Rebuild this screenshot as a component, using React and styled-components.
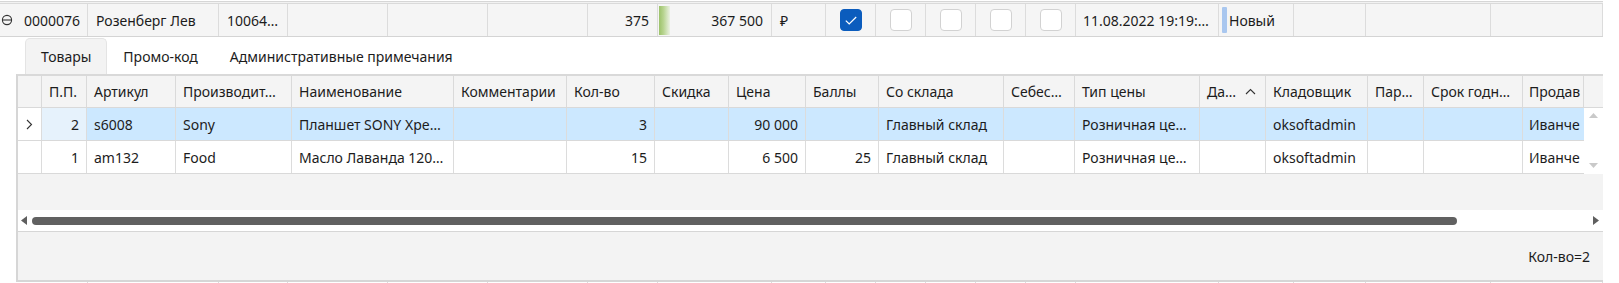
import React from "react";
import styled, { createGlobalStyle } from "styled-components";

const FONT = `"Noto Sans", "Open Sans", "DejaVu Sans", sans-serif`;

const GlobalStyle = createGlobalStyle`
  html, body { margin: 0; padding: 0; background: #ffffff; }
  body { font-family: ${FONT}; font-size: 14px; color: #1c1c1c; overflow: hidden; }
  * { box-sizing: border-box; }
`;

const Page = styled.div`
  width: 1619px;
  height: 283px;
  overflow: hidden;
  padding-top: 1px;
`;

const PrevRowEdge = styled.div`
  width: 1603px;
  height: 2px;
  border-top: 1px solid #d6d6d6;
  background: #f2f2f2;
`;

const masterCols = [88, 131, 69, 100, 100, 100, 70, 114, 54, 50, 50, 50, 50, 50, 143, 75, 72, 125, 112];

const MasterRow = styled.div`
  display: grid;
  grid-template-columns: ${masterCols.map((c) => c + "px").join(" ")};
  width: 1603px;
  height: ${(p) => (p.$stub ? "40px" : "34px")};
  background: ${(p) => (p.$stub ? "#ffffff" : "#f5f5f5")};
  border-top: ${(p) => (p.$stub ? "none" : "1px solid #dadada")};
  border-bottom: 1px solid #d4d4d4;
`;

const MasterCell = styled.div`
  display: flex;
  align-items: center;
  justify-content: ${(p) => (p.$align === "right" ? "flex-end" : p.$align === "center" ? "center" : "flex-start")};
  gap: ${(p) => p.$gap || 0}px;
  padding: 0 ${(p) => (p.$pad ?? 8)}px;
  border-right: 1px solid #dcdcdc;
  white-space: nowrap;
  overflow: hidden;
  min-width: 0;
`;

const Expander = styled.svg`
  flex: none;
  margin-left: -7px;
  margin-right: 11px;
`;

const DataBarCell = styled(MasterCell)`
  justify-content: space-between;
  padding-left: 1px;
`;

const GreenBar = styled.span`
  flex: none;
  width: 11px;
  align-self: stretch;
  margin: 2px 0 1px;
  background: linear-gradient(to right, #9cc26a 0%, #b7d48f 40%, rgba(220, 236, 200, 0.4) 100%);
`;

const StatusBar = styled.span`
  flex: none;
  width: 5px;
  align-self: stretch;
  margin: 3px 0;
  border-radius: 1px;
  background: #a9c7ef;
`;

const Check = styled.span`
  width: 22px;
  height: 22px;
  border-radius: 4px;
  display: flex;
  align-items: center;
  justify-content: center;
  background: ${(p) => (p.$checked ? "#0b5cbd" : "#ffffff")};
  border: 1px solid ${(p) => (p.$checked ? "#0b5cbd" : "#d2d2d2")};
`;

const Detail = styled.div`
  margin-left: 16px;
  width: 1587px;
  background: #ffffff;
`;

const TabStrip = styled.div`
  display: flex;
  align-items: flex-end;
  height: 37px;
  padding-left: 9px;
`;

const Tab = styled.div`
  height: 36px;
  display: flex;
  align-items: center;
  padding: 0 15px;
  border-radius: 5px 5px 0 0;
  border: 1px solid ${(p) => (p.$active ? "#e4e4e4" : "transparent")};
  border-bottom: none;
  background: ${(p) => (p.$active ? "#f3f3f3" : "transparent")};
  color: #1c1c1c;
`;

const Grid = styled.div`
  border-top: 2px solid #d9d9d9;
  border-left: 2px solid #d6d6d6;
  border-bottom: 2px solid #d6d6d6;
  height: 208px;
  display: flex;
  flex-direction: column;
`;

const gridCols = [
  { w: 24, label: "" },
  { w: 45, label: "П.П.", align: "right" },
  { w: 89, label: "Артикул" },
  { w: 116, label: "Производит…" },
  { w: 162, label: "Наименование" },
  { w: 113, label: "Комментарии" },
  { w: 88, label: "Кол-во", align: "right" },
  { w: 74, label: "Скидка", align: "right" },
  { w: 77, label: "Цена", align: "right" },
  { w: 73, label: "Баллы", align: "right" },
  { w: 125, label: "Со склада" },
  { w: 71, label: "Себес…" },
  { w: 125, label: "Тип цены" },
  { w: 66, label: "Да…", sort: true },
  { w: 102, label: "Кладовщик" },
  { w: 56, label: "Пар…" },
  { w: 99, label: "Срок годн…" },
  { w: 61, label: "Продав", clip: true },
];

const colTemplate = gridCols.map((c) => c.w + "px").join(" ");

const HeaderRow = styled.div`
  display: grid;
  grid-template-columns: ${colTemplate} 19px;
  height: 32px;
  background: #f4f4f4;
  border-bottom: 1px solid #d9d9d9;
`;

const HeaderCell = styled.div`
  display: flex;
  align-items: center;
  gap: 9px;
  padding: ${(p) => (p.$clip ? "0 0 0 6px" : "0 7px")};
  border-right: ${(p) => (p.$last ? "none" : "1px solid #dadada")};
  white-space: nowrap;
  overflow: hidden;
  min-width: 0;
`;

const Body = styled.div`
  display: flex;
  height: 66px;
`;

const Rows = styled.div`
  width: 1566px;
  display: flex;
  flex-direction: column;
`;

const DataRow = styled.div`
  display: grid;
  grid-template-columns: ${colTemplate};
  height: 33px;
  border-bottom: 1px solid #d9d9d9;
`;

const DataCell = styled.div`
  display: flex;
  align-items: center;
  justify-content: ${(p) => (p.$align === "right" ? "flex-end" : "flex-start")};
  padding: ${(p) => (p.$clip ? "0 0 0 6px" : "0 7px")};
  border-right: ${(p) => (p.$clip ? "none" : "1px solid #dcdcdc")};
  background: ${(p) => p.$bg};
  white-space: nowrap;
  overflow: hidden;
  min-width: 0;
`;

const VScroll = styled.div`
  width: 19px;
  background: #ffffff;
  display: flex;
  flex-direction: column;
  justify-content: space-between;
  align-items: center;
  padding: 5px 0 6px;
`;

const EmptyArea = styled.div`
  height: 36px;
  background: #f3f3f3;
`;

const HScroll = styled.div`
  height: 22px;
  background: #ffffff;
  border-bottom: 1px solid #d6d6d6;
  display: flex;
  align-items: center;
  padding: 0 4px 0 3px;
`;

const Thumb = styled.div`
  width: 1425px;
  height: 8px;
  margin-left: 5px;
  border-radius: 4px;
  background: #616161;
`;

const Spacer = styled.div`
  flex: 1;
`;

const Footer = styled.div`
  flex: 1;
  background: #f3f3f3;
  display: flex;
  align-items: center;
  justify-content: flex-end;
  padding-right: 13px;
`;

const ChevronRight = () => (
  <svg width="8" height="11" viewBox="0 0 8 11">
    <polyline points="2,1 6.5,5.5 2,10" fill="none" stroke="#333" strokeWidth="1.1" />
  </svg>
);

const ChevronUp = () => (
  <svg width="11" height="7" viewBox="0 0 11 7">
    <polyline points="1,6 5.5,1.5 10,6" fill="none" stroke="#333" strokeWidth="1.1" />
  </svg>
);

const CheckMark = () => (
  <svg width="14" height="11" viewBox="0 0 14 11">
    <polyline points="1.8,5.6 5.2,9 12.2,2" fill="none" stroke="#ffffff" strokeWidth="1.2" />
  </svg>
);

const Tri = ({ dir, color, w, h }) => {
  const pts =
    dir === "up"
      ? `0,${h} ${w / 2},0 ${w},${h}`
      : dir === "down"
      ? `0,0 ${w},0 ${w / 2},${h}`
      : dir === "left"
      ? `${w},0 ${w},${h} 0,${h / 2}`
      : `0,0 ${w},${h / 2} 0,${h}`;
  return (
    <svg width={w} height={h} viewBox={`0 0 ${w} ${h}`}>
      <polygon points={pts} fill={color} />
    </svg>
  );
};

const rows = [
  {
    selected: true,
    cells: ["2", "s6008", "Sony", "Планшет SONY Xpe…", "", "3", "", "90 000", "", "Главный склад", "", "Розничная це…", "", "oksoftadmin", "", "", "Иванче"],
  },
  {
    selected: false,
    cells: ["1", "am132", "Food", "Масло Лаванда 120…", "", "15", "", "6 500", "25", "Главный склад", "", "Розничная це…", "", "oksoftadmin", "", "", "Иванче"],
  },
];

export default function App() {
  return (
    <Page>
      <GlobalStyle />
      <PrevRowEdge />
      <MasterRow>
        <MasterCell $pad={8}>
          <Expander width="12" height="12" viewBox="0 0 12 12">
            <circle cx="6" cy="6" r="4.6" fill="none" stroke="#333" strokeWidth="1.1" />
            <line x1="1.6" y1="6" x2="10.4" y2="6" stroke="#333" strokeWidth="1.1" />
          </Expander>
          0000076
        </MasterCell>
        <MasterCell>Розенберг Лев</MasterCell>
        <MasterCell>10064…</MasterCell>
        <MasterCell />
        <MasterCell />
        <MasterCell />
        <MasterCell $align="right">375</MasterCell>
        <DataBarCell>
          <GreenBar />
          <span>367 500</span>
        </DataBarCell>
        <MasterCell>₽</MasterCell>
        <MasterCell $align="center">
          <Check $checked>
            <CheckMark />
          </Check>
        </MasterCell>
        <MasterCell $align="center">
          <Check />
        </MasterCell>
        <MasterCell $align="center">
          <Check />
        </MasterCell>
        <MasterCell $align="center">
          <Check />
        </MasterCell>
        <MasterCell $align="center">
          <Check />
        </MasterCell>
        <MasterCell $pad={7}>11.08.2022 19:19:…</MasterCell>
        <MasterCell $pad={3} $gap={2}>
          <StatusBar />
          Новый
        </MasterCell>
        <MasterCell />
        <MasterCell />
        <MasterCell />
      </MasterRow>

      <Detail>
        <TabStrip>
          <Tab $active>Товары</Tab>
          <Tab>Промо-код</Tab>
          <Tab>Административные примечания</Tab>
        </TabStrip>
        <Grid>
          <HeaderRow>
            {gridCols.map((c, i) => (
              <HeaderCell key={i} $clip={c.clip}>
                {c.label}
                {c.sort && <ChevronUp />}
              </HeaderCell>
            ))}
            <HeaderCell $last />
          </HeaderRow>
          <Body>
            <Rows>
              {rows.map((r, ri) => (
                <DataRow key={ri}>
                  <DataCell $bg="#ffffff">{r.selected && <ChevronRight />}</DataCell>
                  {r.cells.map((v, ci) => {
                    const col = gridCols[ci + 1];
                    const bg = r.selected ? (ci === 0 ? "#e6f2fc" : "#cce8ff") : "#ffffff";
                    return (
                      <DataCell key={ci} $align={col.align} $bg={bg} $clip={col.clip}>
                        {v}
                      </DataCell>
                    );
                  })}
                </DataRow>
              ))}
            </Rows>
            <VScroll>
              <Tri dir="up" color="#c9c9c9" w={9} h={5} />
              <Tri dir="down" color="#c9c9c9" w={9} h={5} />
            </VScroll>
          </Body>
          <EmptyArea />
          <HScroll>
            <Tri dir="left" color="#5f5f5f" w={6} h={9} />
            <Thumb />
            <Spacer />
            <Tri dir="right" color="#5f5f5f" w={6} h={9} />
          </HScroll>
          <Footer>Кол-во=2</Footer>
        </Grid>
      </Detail>

      <MasterRow $stub>
        {masterCols.map((_, i) => (
          <MasterCell key={i} />
        ))}
      </MasterRow>
    </Page>
  );
}
